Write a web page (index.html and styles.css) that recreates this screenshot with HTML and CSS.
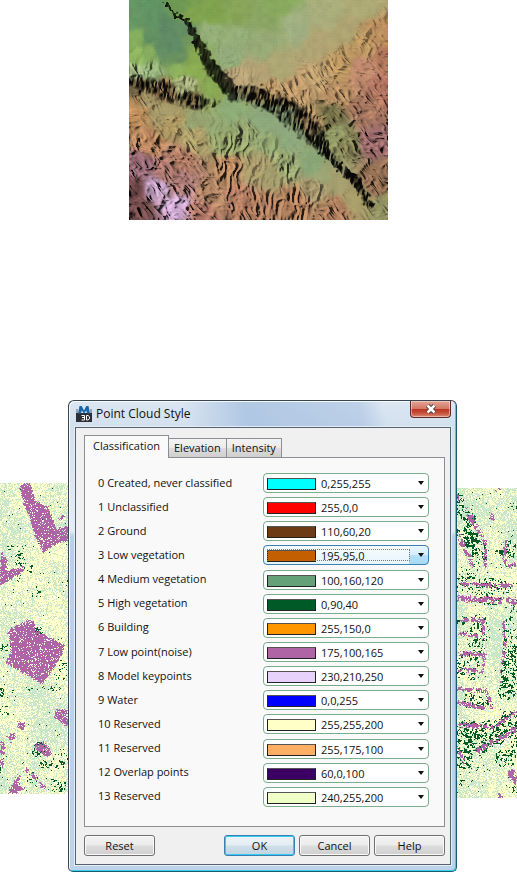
FILE: index.html
```html
<!DOCTYPE html>
<html lang="en">
<head>
<meta charset="utf-8">
<title>Point Cloud Style</title>
<link rel="stylesheet" href="styles.css">
</head>
<body>
<canvas class="terrain" id="terrain" width="259" height="220"></canvas>
<main class="scene">
  <canvas class="cloud cloud-left" id="cloud-left" width="68" height="311"></canvas>
  <section class="dialog" aria-labelledby="dialog-title">
    <header class="titlebar">
      <svg class="app-icon" width="16" height="16" viewBox="0 0 16 16" aria-hidden="true">
        <path d="M0 3h2v5H0zM14 3h2v5h-2z" fill="#9aa2ab"/>
        <rect y="7" width="16" height="9" fill="#2b2e33"/>
        <path d="M2 7.500L3.500 0h2.200L8 4.500 10.300 0h2.200L14 7.500h-3L10.300 4.500 8 7.500 5.700 4.500 5 7.500z" fill="#1766a8"/>
        <path d="M5.500 9.500h3v4.500h-3M6 11.500h2.500M10.500 9.500H12l1.500 1.300v2L12 14h-1.500z" fill="none" stroke="#fff"/>
      </svg>
      <h1 class="title" id="dialog-title">Point Cloud Style</h1>
      <button class="close" type="button" aria-label="Close">
        <svg width="12" height="10" viewBox="0 0 12 10"><path d="M2.500 1.500l7 7M9.500 1.500l-7 7" stroke="#5b3a3c" stroke-width="4.500"/><path d="M2.500 1.500l7 7M9.500 1.500l-7 7" stroke="#fff" stroke-width="2.500"/></svg>
      </button>
    </header>
    <div class="client">
      <nav class="tabs" role="tablist">
        <button class="tab active" type="button" role="tab" aria-selected="true">Classification</button>
        <button class="tab" type="button" role="tab">Elevation</button>
        <button class="tab" type="button" role="tab">Intensity</button>
      </nav>
      <form class="panel" id="classes"></form>
      <footer class="actions">
        <button class="button" type="button">Reset</button>
        <button class="button primary" type="button">OK</button>
        <button class="button" type="button">Cancel</button>
        <button class="button" type="button">Help</button>
      </footer>
    </div>
  </section>
  <canvas class="cloud cloud-right" id="cloud-right" width="60" height="310"></canvas>
</main>
<script src="script.js"></script>
</body>
</html>
```

FILE: styles.css
```css
* { box-sizing: border-box; }
body {
  margin: 0;
  background: #fff;
  color: #111;
  font-family: "Open Sans", "Noto Sans", sans-serif;
  font-size: 11px;
}
button, select { font: inherit; color: inherit; margin: 0; }
.terrain { display: block; margin: 0 auto 180px; }
.scene {
  display: grid;
  grid-template-columns: 68px minmax(0, 1fr) 60px;
  align-items: start;
}
.cloud { display: block; }
.cloud-left { margin-top: 83px; }
.cloud-right { margin-top: 88px; }

.dialog {
  border: 1px solid #38444f;
  border-right-color: #1c5c70;
  border-bottom-color: #1c5c70;
  border-radius: 6px 6px 5px 5px;
  padding: 0 5px 6px 6px;
  background:
    linear-gradient(75deg, transparent 30%, rgba(160, 188, 222, .7) 46%, rgba(160, 188, 222, .5) 75%, transparent 81%) 0 0 / 100% 26px no-repeat,
    linear-gradient(#dbe6f2 0, #d3e0ee 26px, #e4edf6 130px, #b9d0e8 135px, #bcd3ea 100%);
  box-shadow: inset 1px 1px 0 #f4f9fd, inset -1px -1px 0 #35d0ee;
}
.titlebar { display: flex; align-items: flex-start; height: 26px; }
.app-icon { margin: 5px 4px 0 1px; }
.title { flex: 1; margin: 0; padding-top: 4px; font-size: 12px; line-height: 17px; font-weight: 400; }
.close {
  display: flex;
  align-items: center;
  justify-content: center;
  width: 41px;
  height: 17px;
  padding: 0;
  border: 1px solid #5a2a2c;
  border-top: 0;
  border-radius: 0 0 4px 4px;
  background: linear-gradient(#e3a596, #d27764 48%, #b93320 50%, #c5503a 75%, #dc8b72);
  box-shadow: inset 0 0 0 1px rgba(255, 230, 220, .5);
}
.client {
  border: 1px solid #59636e;
  padding: 7px 5px 8px 8px;
  background: #f0f0f0;
  box-shadow: 0 0 0 1px #e2edf7;
}
.tabs { display: flex; align-items: flex-end; height: 23px; margin-bottom: -1px; position: relative; }
.tab {
  height: 20px;
  padding: 0 5px 1px;
  margin-right: -1px;
  border: 1px solid #8c8e94;
  background: linear-gradient(#f3f3f3, #ebebeb 49%, #dddddd 51%, #cfcfcf);
  line-height: 18px;
}
.tab.active { height: 23px; padding: 0 8px 2px; border-bottom: 0; background: #fafafa; }
.panel {
  display: grid;
  grid-auto-rows: 1fr;
  height: 370px;
  padding: 13px 15px 17px 13px;
  border: 1px solid #8c8e94;
  background: #f9f9f9;
}
.row { display: grid; grid-template-columns: minmax(0, 1fr) 166px; align-items: center; }
.row label { padding-bottom: 2px; line-height: 17px; }
.combo { position: relative; height: 20px; }
.combo select {
  display: block;
  width: 100%;
  height: 20px;
  padding: 1px 20px 0 57px;
  border: 1px solid #79ad8c;
  border-radius: 4px;
  appearance: none;
  outline: 0;
  background: #fff;
  line-height: 17px;
}
.swatch {
  position: absolute;
  left: 4px;
  top: 5px;
  width: 49px;
  height: 12px;
  border: 1px solid #222;
  border-top-color: #555;
  pointer-events: none;
}
.arrow { position: absolute; right: 5px; top: 8px; pointer-events: none; }
.combo.focused select {
  border-color: #3c7fb1;
  background: linear-gradient(#eaf6fd, #d4eefc 49%, #b4e1f9 51%, #a7d9f5) right / 19px 100% no-repeat, linear-gradient(#f7fcff, #e6f5fd);
}
.combo.focused::after {
  content: "";
  position: absolute;
  left: 4px;
  right: 19px;
  top: 4px;
  bottom: 4px;
  border: 1px dotted #777;
  pointer-events: none;
}
.actions { display: flex; gap: 4px; margin-top: 8px; }
.button {
  width: 71px;
  height: 21px;
  padding: 0;
  border: 1px solid #707070;
  border-radius: 3px;
  background: linear-gradient(#f3f3f3, #ebebeb 49%, #dddddd 51%, #cfcfcf);
  box-shadow: inset 0 0 0 1px #fafafa;
  line-height: 18px;
}
.button:first-child { margin-right: auto; }
.button.primary {
  border-color: #3c7fb1;
  background: linear-gradient(#eef4f7, #e2edf3 49%, #cfe0e9 51%, #c0d5e0);
  box-shadow: inset 0 0 0 1px #35cbf4;
}
```

FILE: script.js
```js
const classes = [
  ['0 Created, never classified', '0,255,255'], ['1 Unclassified', '255,0,0'],
  ['2 Ground', '110,60,20'], ['3 Low vegetation', '195,95,0'],
  ['4 Medium vegetation', '100,160,120'], ['5 High vegetation', '0,90,40'],
  ['6 Building', '255,150,0'], ['7 Low point(noise)', '175,100,165'],
  ['8 Model keypoints', '230,210,250'], ['9 Water', '0,0,255'],
  ['10 Reserved', '255,255,200'], ['11 Reserved', '255,175,100'],
  ['12 Overlap points', '60,0,100'], ['13 Reserved', '240,255,200']
];
document.getElementById('classes').innerHTML = classes.map(([name, rgb], i) => `
  <div class="row"><label for="class-${i}">${name}</label>
  <div class="combo${i === 3 ? ' focused' : ''}"><select id="class-${i}"><option>${rgb}</option></select>
  <span class="swatch" style="background:rgb(${rgb})"></span>
  <svg class="arrow" width="6" height="4" viewBox="0 0 6 4"><path d="M0 0h6L3 4z" fill="#111"/></svg></div></div>`).join('');

// Value noise helpers
function hash(x, y, s) {
  let h = Math.imul(x, 374761393) ^ Math.imul(y, 668265263) ^ Math.imul(s, 974711);
  h = Math.imul(h ^ (h >>> 13), 1274126177);
  return ((h ^ (h >>> 16)) >>> 0) / 4294967296;
}
function noise(x, y, s) {
  const i = Math.floor(x), j = Math.floor(y);
  let u = x - i, v = y - j;
  u = u * u * (3 - 2 * u); v = v * v * (3 - 2 * v);
  const a = hash(i, j, s), b = hash(i + 1, j, s), c = hash(i, j + 1, s), d = hash(i + 1, j + 1, s);
  return a + (b - a) * u + (c - a) * v + (a - b - c + d) * u * v;
}
function segment(x, y, a, b) {
  const dx = b[0] - a[0], dy = b[1] - a[1];
  const t = Math.max(0, Math.min(1, ((x - a[0]) * dx + (y - a[1]) * dy) / (dx * dx + dy * dy)));
  return [Math.hypot(x - a[0] - t * dx, y - a[1] - t * dy), t];
}

// Shaded relief. Samples: x, y, colour, roughness, ridge direction (0 down-right, 1 vertical, 2 steep right)
const samples = `60,60,5f8f62,0,0 140,130,5c8662,0,0 60,15,5f9162,0,0 15,60,659462,0,0 110,80,5c8662,0,0 165,85,628a62,0,0
100,150,608a62,0,0 150,175,668c5c,0,0 180,120,6e9258,0,0 200,150,84a452,0,0 60,110,5f8c60,0,0 20,115,82aa5a,0,0 20,165,8cb35e,.1,1
70,160,82a85c,.05,1 195,175,86a64c,0,0 150,20,6a9450,0,0 190,45,7c9f4c,0,0 250,40,7c9f4c,0,0 320,40,84a055,0,0 450,15,86a65c,0,0
190,215,87a950,.05,0 240,265,86a552,0,0 150,205,8aae5a,.05,0
240,100,93ab77,.05,0 320,110,93ab77,.05,0 300,170,90a878,.1,0 400,130,93a674,0,0 400,60,88a262,0,0
500,80,9cab7e,0,0 600,40,a5aa78,0,0 700,20,aaa673,0,0 560,130,aba070,0,0 450,200,a9a371,0,0 650,90,a9a06f,0,0 400,225,ae9d70,.05,0
330,225,b4a075,.25,1 420,265,b99868,.5,2 500,270,b89468,.6,2 560,230,b99b6c,.45,0 640,190,b8935f,.5,0 740,100,b48a5c,.35,0
700,130,b6925e,.45,0 700,210,b9856a,.35,0 765,180,ac7458,.4,0 620,280,b08a60,.6,0 760,260,aa705c,.7,0 700,330,a0725c,.9,0
730,420,936566,1,0 650,430,7c7a50,.9,0 600,350,6f6b45,.9,0 740,540,8c6a50,.9,0 610,410,8f9865,.4,0 765,630,8f8e60,.45,0
300,330,8aa874,.02,0 400,360,8aa578,.02,0 200,355,94a070,.05,0 100,335,a49968,.1,0 480,410,8ba57a,0,0 450,370,8aa278,0,0
550,490,86a274,0,0 620,540,a09a6c,0,0 680,600,a59b68,0,0 580,525,9aa272,0,0 260,370,90a470,.1,1 60,210,93b07a,.7,1
170,250,a3ab78,.6,1 20,215,9aaf7b,.8,1 100,270,8b6f4a,1,2 200,300,7c6b45,1,1 20,250,6a5a3e,1,2 230,300,8ea15e,.6,1
60,300,97885e,.5,2 20,340,b98a5a,.7,0 130,375,a8935f,.5,0 60,420,b07f5a,.9,0 200,410,a99b66,.5,0 150,480,a87660,.9,0
300,430,8e9c65,.7,1 300,500,ab805c,.9,1 350,400,8c9a68,.8,1 40,500,8e6470,1,0 80,560,b898b8,1,0 150,620,c4a2c8,.8,0
110,510,a07068,.9,0 150,550,a47470,.9,0 30,620,704a4a,1,0 20,570,6c4648,1,0 250,580,a87f60,.8,0 380,500,a49668,.4,1 460,490,93a06c,.8,1 420,520,a0996a,.15,1
420,430,92a570,.3,1 500,600,a87a58,.9,1 400,620,a37558,.9,1 620,630,a8795a,.8,0 330,600,a8755c,.9,1 560,560,a2926a,.6,1
210,640,a57060,1,0 560,360,a98a60,.8,1`.split(/\s+/).map(s => {
  const p = s.split(',');
  return { x: p[0] / 3, y: p[1] / 3, c: [0, 2, 4].map(k => parseInt(p[2].substr(k, 2), 16)), r: +p[3], d: +p[4] };
});
const scarp = [[110, 12, 5], [132, 40, 7], [165, 60, 8], [200, 110, 14], [235, 180, 20], [270, 230, 26], [310, 275, 26],
  [380, 285, 36], [450, 315, 38], [520, 370, 42], [560, 410, 34], [610, 480, 14], [680, 540, 14], [720, 610, 16]];
const westRidge = [[0, 235, 22], [60, 255, 30], [130, 280, 34], [200, 305, 28], [250, 312, 12]];
function band(x, y, line) {
  let best = 0;
  for (let i = 1; i < line.length; i++) {
    const [d, t] = segment(x, y, line[i - 1], line[i]);
    const w = line[i - 1][2] * (1 - t) + line[i][2] * t;
    best = Math.max(best, 1 - d / w);
  }
  return Math.max(0, best);
}
const angles = [0.65, 1.6, 1.1];
function ridges(x, y, k) {
  const wx = x + 7 * noise(x / 11, y / 11, 5), wy = y + 7 * noise(x / 11, y / 11, 6);
  const a = angles[k], u = wx * Math.cos(a) + wy * Math.sin(a), v = -wx * Math.sin(a) + wy * Math.cos(a);
  const big = 1 - Math.abs(2 * noise(u / 13, v / 5, 11 + k) - 1);
  const small = 1 - Math.abs(2 * noise(u / 5, v / 2.6, 21 + k) - 1);
  return big * 5 + small * 2.2;
}
(function drawTerrain() {
  const ctx = document.getElementById('terrain').getContext('2d');
  const w = 259, h = 220, img = ctx.createImageData(w, h);
  for (let y = 0; y < h; y++) for (let x = 0; x < w; x++) {
    let sum = 0, r = 0, c = [0, 0, 0], dir = [0, 0, 0];
    const qx = x + 6 * (noise(x / 9, y / 9, 1) - .5), qy = y + 6 * (noise(x / 9, y / 9, 2) - .5);
    for (const s of samples) {
      const d = (s.x - qx) ** 2 + (s.y - qy) ** 2 + 6, k = 1 / (d * d * Math.sqrt(d));
      sum += k; r += s.r * k; dir[s.d] += k;
      for (let n = 0; n < 3; n++) c[n] += s.c[n] * k;
    }
    r /= sum;
    const e = band(x * 3 + 18 * (noise(x / 3, y / 3, 3) - .5), y * 3 + 18 * (noise(x / 3, y / 3, 4) - .5), scarp);
    const f = band(x * 3, y * 3, westRidge);
    let slope = 0;
    for (let k = 0; k < 3; k++) if (dir[k] > sum * .04)
      slope += (ridges(x + 1, y + .5, k) - ridges(x - 1, y - .5, k)) * dir[k] / sum;
    const s = slope < 0 ? Math.max(-.92, -slope * slope * .22 + slope * .14) : Math.min(.24, slope * .14);
    let light = 1.03 + r * s + (hash(x, y, 9) - .5) * .03;
    light += (noise(x / 5, y / 5, 8) - .5) * .06;
    if (x % 3 === 0 || y % 3 === 0) light -= .012;
    const streak = noise((x + y * .2) / 1.6, y / 6, 31);
    const gully = x > 105 ? Math.min(1, Math.max(0, streak * 2.2 - .3)) : .55 + .45 * streak;
    light *= 1 - Math.min(1, e * 2.6) * (.12 + .82 * gully);
    light *= 1 - Math.min(1, f * 2) * .9 * Math.min(1, Math.max(0, streak * 2.2 - .5));
    const o = (y * w + x) * 4;
    for (let n = 0; n < 3; n++) img.data[o + n] = c[n] / sum * light;
    img.data[o + 3] = 255;
  }
  ctx.putImageData(img, 0, 0);
})();

// Classified points: building footprints (polygons), vegetation clumps (x, y, rx, ry, density)
const leftRoofs = [
  [[20, 4], [23, 0], [30, 0], [35, 17], [40, 20], [48, 24], [56, 46], [68, 42], [68, 57], [56, 60], [43, 69], [34, 52], [28, 30], [23, 20]],
  [[0, 67], [7, 76], [6, 88], [22, 83], [25, 87], [0, 102]],
  [[7, 147], [28, 136], [33, 138], [35, 147], [40, 149], [64, 162], [61, 172], [42, 201], [5, 179], [11, 166]],
  [[57, 225], [68, 227], [68, 243], [53, 234]], [[58, 34], [64, 31], [63, 36], [59, 37]],
  [[18, 238], [25, 239], [23, 246], [16, 245]], [[9, 250], [16, 251], [11, 259], [7, 254]],
  [[0, 257], [5, 264], [3, 272], [0, 271]], [[0, 275], [4, 280], [2, 284], [0, 284]],
  [[34, 261], [44, 259], [52, 269], [47, 274], [36, 267]],
  [[7, 310], [18, 291], [21, 292], [17, 299], [24, 305], [16, 310]],
  [[25, 284], [29, 286], [26, 289], [23, 288]], [[31, 289], [35, 291], [36, 297], [32, 295]], [[38, 298], [45, 302], [45, 305], [39, 303]]
];
const leftTrees = [[12, 64, 6, 3, .2], [19, 75, 5, 8, .3], [28, 86, 5, 8, .22], [35, 109, 6, 5, .2], [18, 95, 4, 4, .2],
  [38, 148, 5, 5, .5], [5, 164, 7, 4, .35], [60, 188, 7, 12, .15], [1, 210, 3, 6, .6], [5, 226, 6, 6, .2], [38, 266, 7, 8, .55],
  [60, 278, 9, 9, .3], [46, 281, 8, 4, .3], [32, 294, 6, 8, .2], [56, 302, 10, 7, .15], [3, 291, 5, 10, .13], [55, 67, 7, 5, .15], [42, 205, 20, 3, .15]];
const strip = (x1, y1, x2, y2, w) => [[x1, y1 - w], [x2, y2 - w], [x2, y2 + w], [x1, y1 + w]];
const rightRoofs = [
  [[37, 0], [46, 0], [42, 5]], [[31, 24], [36, 26], [37, 32], [34, 31]],
  strip(0, 7, 3, 14, 3), strip(9, 23, 20, 40, 5), strip(20, 40, 29, 57, 4), strip(1, 48, 16, 77, 5),
  strip(3, 95, 34, 97, 2), strip(37, 97, 59, 97, 2), strip(0, 110, 59, 113, 3), strip(2, 131, 26, 132, 2), strip(1, 145, 20, 147, 2),
  strip(0, 165, 27, 166, 2), strip(0, 181, 24, 183, 2), strip(0, 200, 29, 202, 2), strip(29, 203, 35, 218, 4),
  strip(0, 214, 28, 220, 2), strip(0, 236, 36, 239, 2), strip(38, 238, 59, 223, 2), strip(18, 263, 59, 240, 3),
  strip(0, 260, 7, 275, 4), [[27, 57], [30, 62], [29, 80], [26, 80]], [[47, 51], [50, 52], [49, 77], [45, 76]],
  [[45, 132], [48, 132], [49, 163], [45, 176], [43, 190], [45, 200], [42, 192], [46, 158]],
  [[24, 132], [27, 131], [27, 150], [25, 150]], [[25, 164], [28, 165], [26, 186], [24, 184]],
  [[50, 283], [56, 280], [59, 289], [59, 299], [52, 291]], [[41, 304], [47, 310], [40, 310]], [[50, 76], [59, 74], [59, 79], [52, 80]]
];
const rightTrees = [[2, 16, 5, 12, .35], [11, 30, 8, 9, .45], [14, 51, 8, 10, .7], [6, 43, 7, 8, .3], [22, 67, 8, 16, .35], [42, 64, 5, 3, .8],
  [54, 58, 6, 12, .35], [55, 18, 5, 4, .35], [8, 92, 12, 12, .3], [33, 103, 22, 14, .25], [53, 117, 8, 8, .3], [5, 132, 6, 5, .5],
  [21, 145, 12, 20, .22], [53, 151, 8, 24, .25], [10, 178, 13, 16, .25], [52, 188, 9, 24, .4], [47, 203, 7, 8, .5], [18, 212, 14, 12, .25],
  [11, 249, 14, 18, .5], [34, 245, 15, 14, .45], [50, 236, 12, 14, .4], [7, 269, 10, 12, .4], [48, 270, 11, 9, .3], [18, 260, 12, 9, .4],
  [29, 280, 12, 4, .2], [57, 253, 4, 12, .4], [55, 302, 5, 5, .3], [10, 294, 10, 4, .12]];
function inside(x, y, poly) {
  let hit = false;
  for (let i = 0, j = poly.length - 1; i < poly.length; j = i++) {
    const [ax, ay] = poly[i], [bx, by] = poly[j];
    if ((ay > y) !== (by > y) && x < (bx - ax) * (y - ay) / (by - ay) + ax) hit = !hit;
  }
  return hit;
}
function drawCloud(id, roofs, trees, seed, gaps, broken) {
  const canvas = document.getElementById(id), ctx = canvas.getContext('2d');
  for (let y = 0; y < canvas.height; y++) for (let x = 0; x < canvas.width; x++) {
    const r = hash(x, y, seed), q = hash(x, y, seed + 1), t = hash(x, y, seed + 2);
    const field = noise(x / 19, y / 23, seed + 3) * .6 + noise(x / 2, y / 2, seed + 4) * .5 + r * .8;
    let color = field > .96 ? '#ffffc8' : '#c8e6c8';
    if (q < .07) color = '#ffffff';
    if (t < .005) color = '#005a28';
    for (const [cx, cy, rx, ry, p] of trees) {
      const d = ((x - cx) / rx) ** 2 + ((y - cy) / ry) ** 2;
      if (d < 1 && noise(x / 1.7, y / 1.7, seed + 5) * .7 + t * .3 < .2 + p * .5) color = '#005a28';
    }
    const jx = x + (r - .5) * 2.2, jy = y + (t - .5) * 2.2;
    const solid = q > gaps && noise(x / 2.5, y / 2.5, seed + 6) > broken;
    if (solid && roofs.some(p => inside(jx, jy, p))) color = '#af64a5';
    ctx.fillStyle = color;
    ctx.fillRect(x, y, 1, 1);
  }
}
drawCloud('cloud-left', leftRoofs, leftTrees, 40, .13, 0);
drawCloud('cloud-right', rightRoofs, rightTrees, 60, .08, .32);
```
